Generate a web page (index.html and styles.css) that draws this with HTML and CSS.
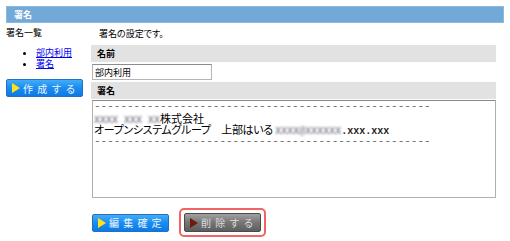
FILE: index.html
```html
<!DOCTYPE html>
<html lang="ja">
<head>
    <meta charset="UTF-8">
    <title>署名</title>
    <link rel="stylesheet" href="styles.css">
</head>
<body>
    <div class="title-bar">署名</div>

    <div class="main">
        <div class="side">
            <div class="side-title">署名一覧</div>
            <ul class="side-list">
                <li><a href="#">部内利用</a></li>
                <li><a href="#">署名</a></li>
            </ul>
            <button class="btn btn-blue btn-create"><span class="tri"></span>作成する</button>
        </div>

        <div class="content">
            <p class="lead">署名の設定です。</p>
            <div class="field-label">名前</div>
            <div class="field-row">
                <input type="text" class="name-input" value="部内利用">
            </div>
            <div class="field-label">署名</div>
            <div class="sig-box">
                <div class="sig-line mono">---------------------------------------------------</div>
                <div class="sig-line"><span class="blur mono">XXXX XXX XX</span>株式会社</div>
                <div class="sig-line"><span class="tight">オープンシステムグループ　上部はいる</span>&nbsp;<span class="blur mono">XXXX@XXXXXX</span><span class="mono dark">.xxx.xxx</span></div>
                <div class="sig-line mono">---------------------------------------------------</div>
            </div>

            <div class="actions">
                <button class="btn btn-blue btn-save"><span class="tri"></span>編集確定</button>
                <div class="focus-ring">
                    <button class="btn btn-gray btn-delete"><span class="tri tri-dark"></span>削除する</button>
                </div>
            </div>
        </div>
    </div>
</body>
</html>
```

FILE: styles.css
```css
body {
    margin: 0;
    padding: 6px;
    background: white;
    font-family: "Noto Sans CJK JP", "Liberation Sans", sans-serif;
    font-size: 9px;
    color: #000;
    font-feature-settings: "palt";
}
.title-bar {
    height: 15px;
    line-height: 15px;
    background: #73a9d8;
    border: 1px solid #8ab9e2;
    color: white;
    font-weight: bold;
    padding-left: 7px;
}
.main {
    display: flex;
}
.side {
    width: 85px;
    flex: none;
}
.side-title {
    margin-top: 4px;
    line-height: 12px;
}
.side-list {
    margin: 8px 0 0 0;
    padding-left: 30px;
    line-height: 11px;
}
.side-list a {
    color: #0000ee;
}
.btn {
    display: flex;
    align-items: center;
    height: 18px;
    padding: 0 0 0 5px;
    border-radius: 2px;
    font-family: inherit;
    font-size: 10px;
    letter-spacing: 4.2px;
    white-space: nowrap;
    cursor: pointer;
}
.btn-blue {
    background: linear-gradient(#42acf6, #1a8cf0 50%, #0c7ae6);
    border: 1px solid #2270c0;
    color: #eef6ff;
}
.btn-gray {
    background: linear-gradient(#a0a0a0, #767676 50%, #5e5e5e);
    border: 1px solid #4a4a4a;
    color: #dcdcdc;
}
.tri {
    width: 0;
    height: 0;
    border-top: 5px solid transparent;
    border-bottom: 5px solid transparent;
    border-left: 8px solid #ffe21a;
    margin-right: 3px;
}
.tri-dark {
    border-left-color: #6e1a0c;
}
.btn-create {
    width: 77px;
    margin-top: 10px;
}
.content {
    flex: 1;
    margin-right: 8px;
}
.lead {
    margin: 5px 0 0 8px;
    line-height: 12px;
}
.field-label {
    background: #e2e2e2;
    height: 17px;
    line-height: 17px;
    font-weight: bold;
    padding-left: 6px;
    margin-top: 5px;
}
.field-row {
    padding: 2px 0 2px 1px;
}
.name-input {
    display: block;
    box-sizing: border-box;
    width: 120px;
    height: 16px;
    margin: 0;
    padding: 0 2px;
    border: 1px solid #b4b4b4;
    border-top-color: #8c8c8c;
    font-family: inherit;
    font-size: 9px;
}
.field-row + .field-label {
    margin-top: 0;
}
.sig-box {
    box-sizing: border-box;
    height: 98px;
    margin: 1px 0 0 1px;
    padding: 0 1px;
    border: 1px solid #b0b0b0;
    border-top-color: #888;
    font-size: 11px;
    white-space: nowrap;
    overflow: hidden;
}
.sig-line {
    height: 11.5px;
    line-height: 11.5px;
}
.tight {
    letter-spacing: -0.35px;
}
.mono {
    font-family: "Liberation Mono", "Noto Sans CJK JP", monospace;
    font-size: 11px;
    color: #666;
}
.mono.dark {
    font-size: 10px;
    color: #222;
    font-weight: bold;
}
.blur {
    font-size: 10px;
    font-weight: bold;
    filter: blur(1.1px);
    color: #8a8a98;
}
.actions {
    display: flex;
    align-items: center;
    gap: 10px;
    margin: 10px 0 0 1px;
}
.btn-save {
    width: 77px;
}
.focus-ring {
    padding: 3px;
    border: 2px solid #f26464;
    border-radius: 5px;
}
.btn-delete {
    width: 77px;
    height: 19px;
}
```
